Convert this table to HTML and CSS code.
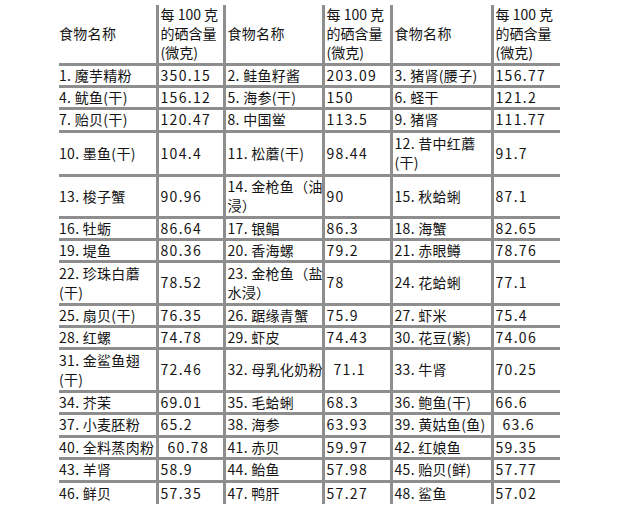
FILE: index.html
```html
<!DOCTYPE html>
<html lang="zh-CN">
<head>
<meta charset="utf-8">
<title>食物硒含量</title>
<link rel="stylesheet" href="styles.css">
</head>
<body>
<table class="se">
<colgroup>
<col class="c-name1"><col class="c-val1"><col class="c-name2"><col class="c-val2"><col class="c-name3"><col class="c-val3">
</colgroup>
<tr class="head">
<td>食物名称</td><td>每 100 克<br>的硒含量<br>(微克)</td>
<td>食物名称</td><td>每 100 克<br>的硒含量<br>(微克)</td>
<td>食物名称</td><td>每 100 克<br>的硒含量<br>(微克)</td>
</tr>
<tr class="s21"><td>1. 魔芋精粉</td><td>350.15</td><td>2. 鲑鱼籽酱</td><td>203.09</td><td>3. 猪肾(腰子)</td><td>156.77</td></tr>
<tr class="s22"><td>4. 鱿鱼(干)</td><td>156.12</td><td>5. 海参(干)</td><td>150</td><td>6. 蛏干</td><td>121.2</td></tr>
<tr class="s23"><td>7. 贻贝(干)</td><td>120.47</td><td>8. 中国鲎</td><td>113.5</td><td>9. 猪肾</td><td>111.77</td></tr>
<tr class="d44"><td>10. 墨鱼(干)</td><td>104.4</td><td>11. 松蘑(干)</td><td>98.44</td><td>12. 昔中红蘑<br>(干)</td><td>91.7</td></tr>
<tr class="d42"><td>13. 梭子蟹</td><td>90.96</td><td>14. 金枪鱼（油<br>浸）</td><td>90</td><td>15. 秋蛤蜊</td><td>87.1</td></tr>
<tr class="s22"><td>16. 牡蛎</td><td>86.64</td><td>17. 银鲳</td><td>86.3</td><td>18. 海蟹</td><td>82.65</td></tr>
<tr class="s22"><td>19. 堤鱼</td><td>80.36</td><td>20. 香海螺</td><td>79.2</td><td>21. 赤眼鳟</td><td>78.76</td></tr>
<tr class="d43"><td>22. 珍珠白蘑<br>(干)</td><td>78.52</td><td>23. 金枪鱼（盐<br>水浸）</td><td>78</td><td>24. 花蛤蜊</td><td>77.1</td></tr>
<tr class="s22"><td>25. 扇贝(干)</td><td>76.35</td><td>26. 踞缘青蟹</td><td>75.9</td><td>27. 虾米</td><td>75.4</td></tr>
<tr class="s22"><td>28. 红螺</td><td>74.78</td><td>29. 虾皮</td><td>74.43</td><td>30. 花豆(紫)</td><td>74.06</td></tr>
<tr class="d43"><td>31. 金鲨鱼翅<br>(干)</td><td>72.46</td><td>32. 母乳化奶粉</td><td class="ind">71.1</td><td>33. 牛肾</td><td>70.25</td></tr>
<tr class="s22"><td>34. 芥茉</td><td>69.01</td><td>35. 毛蛤蜊</td><td>68.3</td><td>36. 鲍鱼(干)</td><td>66.6</td></tr>
<tr class="s23"><td>37. 小麦胚粉</td><td>65.2</td><td>38. 海参</td><td>63.93</td><td>39. 黄姑鱼(鱼)</td><td class="ind">63.6</td></tr>
<tr class="s22"><td>40. 全料蒸肉粉</td><td class="ind">60.78</td><td>41. 赤贝</td><td>59.97</td><td>42. 红娘鱼</td><td>59.35</td></tr>
<tr class="s23"><td>43. 羊肾</td><td>58.9</td><td>44. 鲐鱼</td><td>57.98</td><td>45. 贻贝(鲜)</td><td>57.77</td></tr>
<tr class="s23"><td>46. 鲜贝</td><td>57.35</td><td>47. 鸭肝</td><td>57.27</td><td>48. 鲨鱼</td><td>57.02</td></tr>
</table>
</body>
</html>
```
FILE: styles.css
```css
html, body {
  margin: 0;
  background: #fff;
}
body {
  padding: 5px 0 0 59px;
  font-family: "Noto Sans CJK SC", "Noto Sans", sans-serif;
  font-size: 14px;
  color: #141414;
}
.se {
  border-collapse: collapse;
  table-layout: fixed;
  width: 501px;
}
.c-name1 { width: 98px; }
.c-val1 { width: 67px; }
.c-name2 { width: 99px; }
.c-val2 { width: 68px; }
.c-name3 { width: 101px; }
.c-val3 { width: 68px; }
.se td {
  padding: 0 0 0 2px;
  border: 3px solid #8e8e8e;
  vertical-align: middle;
  text-align: left;
  white-space: nowrap;
  line-height: 19px;
  overflow: hidden;
}
.se tr:first-child td { border-top: none; }
.se tr:last-child td { border-bottom: none; }
.se td:first-child { border-left: none; padding-left: 0; }
.se td:last-child { border-right: none; }
.se tr + tr td:nth-child(even) { letter-spacing: 1.3px; }
.se td:nth-child(odd) { letter-spacing: 0.3px; }
.head { height: 59px; }
.s21 { height: 21px; }
.s22 { height: 22px; }
.s23 { height: 23px; }
.d42 { height: 42px; }
.d43 { height: 43px; }
.d44 { height: 44px; }
.se td.ind { padding-left: 9px; }
```
